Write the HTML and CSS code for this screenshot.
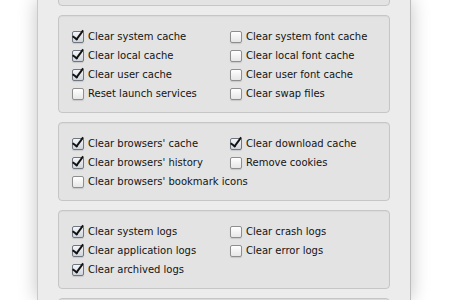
FILE: index.html
```html
<!DOCTYPE html>
<html>
<head>
<meta charset="utf-8">
<link rel="stylesheet" href="styles.css">
</head>
<body>
<div class="window">
  <div class="stack">
    <div class="group group-top"></div>

    <div class="group">
      <div class="grid">
        <label class="item"><span class="cb on"></span>Clear system cache</label>
        <label class="item"><span class="cb"></span>Clear system font cache</label>
        <label class="item"><span class="cb on"></span>Clear local cache</label>
        <label class="item"><span class="cb"></span>Clear local font cache</label>
        <label class="item"><span class="cb on"></span>Clear user cache</label>
        <label class="item"><span class="cb"></span>Clear user font cache</label>
        <label class="item"><span class="cb"></span>Reset launch services</label>
        <label class="item"><span class="cb"></span>Clear swap files</label>
      </div>
    </div>

    <div class="group">
      <div class="grid">
        <label class="item"><span class="cb on"></span>Clear browsers' cache</label>
        <label class="item"><span class="cb on"></span>Clear download cache</label>
        <label class="item"><span class="cb on"></span>Clear browsers' history</label>
        <label class="item"><span class="cb"></span>Remove cookies</label>
        <label class="item wide"><span class="cb"></span>Clear browsers' bookmark icons</label>
      </div>
    </div>

    <div class="group">
      <div class="grid">
        <label class="item"><span class="cb on"></span>Clear system logs</label>
        <label class="item"><span class="cb"></span>Clear crash logs</label>
        <label class="item"><span class="cb on"></span>Clear application logs</label>
        <label class="item"><span class="cb"></span>Clear error logs</label>
        <label class="item"><span class="cb on"></span>Clear archived logs</label>
      </div>
    </div>

    <div class="group group-bottom"></div>
  </div>
</div>
</body>
</html>
```

FILE: styles.css
```css
html, body {
  margin: 0;
  padding: 0;
  background: #ffffff;
  width: 450px;
  height: 300px;
  overflow: hidden;
}

body {
  display: flex;
  font-family: "DejaVu Sans", "Liberation Sans", sans-serif;
  font-size: 10px;
  color: #141414;
}

.window {
  margin-left: 37px;
  width: 374px;
  height: 300px;
  background: #ececec;
  border-left: 1px solid #c9c9c9;
  border-right: 1px solid #bdbdbd;
  box-sizing: border-box;
  box-shadow: 0 0 18px rgba(0, 0, 0, 0.24);
  padding: 0 20px;
  overflow: hidden;
}

.stack {
  display: flex;
  flex-direction: column;
  gap: 9px;
  margin-top: -30px;
}

.group {
  background: #e3e3e3;
  border: 1px solid #c6c6c6;
  border-radius: 4px;
  padding: 11px 0 9px 13px;
  box-shadow: inset 0 1px 1px rgba(0,0,0,0.04);
}

.group-top {
  height: 14px;
}

.group-bottom {
  height: 40px;
}

.grid {
  display: grid;
  grid-template-columns: 158px auto;
  grid-auto-rows: 19px;
}

.item {
  display: flex;
  align-items: center;
  gap: 4px;
  white-space: nowrap;
}

.item.wide {
  grid-column: 1 / span 2;
}

.cb {
  position: relative;
  width: 10px;
  height: 10px;
  flex: none;
  border: 1px solid #8e8e8e;
  border-radius: 2px;
  background: linear-gradient(#ffffff, #e6e6e6);
  box-shadow: 0 1px 1px rgba(0,0,0,0.12);
}

.cb.on {
  border-color: #6f7680;
  background: linear-gradient(#f4f6f9, #cfd4db);
}

.cb.on::after {
  content: "";
  position: absolute;
  left: 2px;
  top: -4px;
  width: 4px;
  height: 10px;
  border-right: 2.4px solid #111;
  border-bottom: 2.4px solid #111;
  transform: rotate(36deg);
  transform-origin: center;
}
```
